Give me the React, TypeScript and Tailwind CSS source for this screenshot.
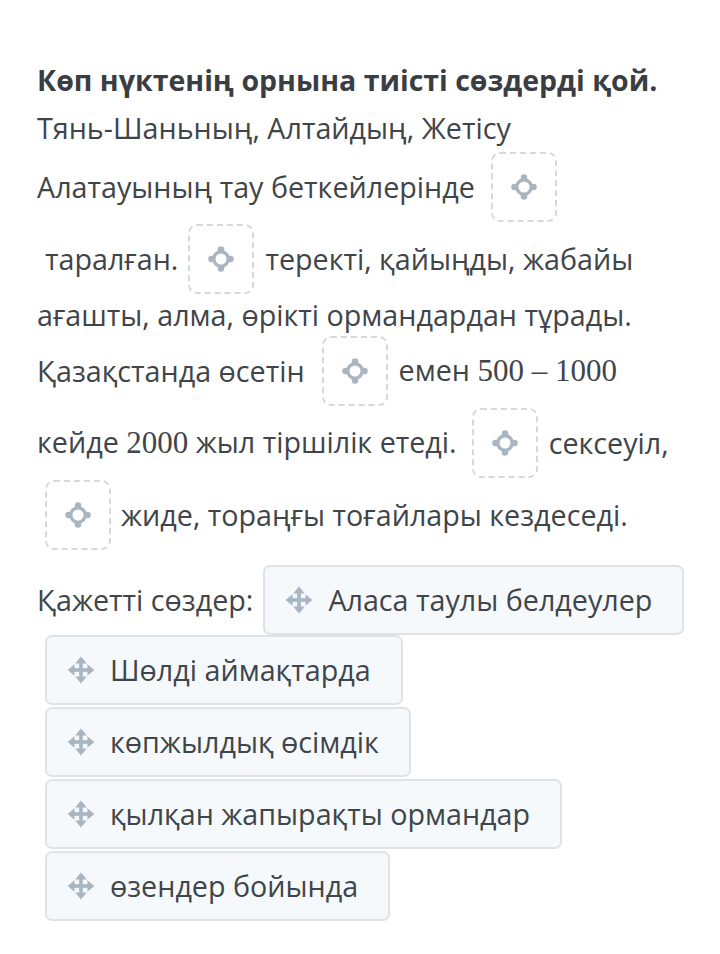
import React from "react";

const TargetIcon = () => (
  <svg width="30" height="30" viewBox="0 0 24 24" className="text-[#a9b6c1]">
    <circle cx="12" cy="12" r="5.8" fill="none" stroke="currentColor" strokeWidth="2.8" />
    <circle cx="12" cy="4.4" r="2.6" fill="currentColor" />
    <circle cx="12" cy="19.6" r="2.6" fill="currentColor" />
    <circle cx="4.4" cy="12" r="2.6" fill="currentColor" />
    <circle cx="19.6" cy="12" r="2.6" fill="currentColor" />
  </svg>
);

const MoveIcon = () => (
  <svg width="28" height="28" viewBox="0 0 24 24" className="text-[#a9b6c1] shrink-0">
    <rect x="10.4" y="5" width="3.2" height="14" fill="currentColor" />
    <rect x="5" y="10.4" width="14" height="3.2" fill="currentColor" />
    <path d="M12 0.5 L17 6.5 H7 Z" fill="currentColor" />
    <path d="M12 23.5 L17 17.5 H7 Z" fill="currentColor" />
    <path d="M0.5 12 L6.5 7 V17 Z" fill="currentColor" />
    <path d="M23.5 12 L17.5 7 V17 Z" fill="currentColor" />
  </svg>
);

const Drop = ({ className = "" }: { className?: string }) => (
  <span
    className={
      "inline-flex w-[66px] h-[70px] shrink-0 items-center justify-center rounded-[9px] border-2 border-dashed border-[#d6d8da] bg-white " +
      className
    }
  >
    <TargetIcon />
  </span>
);

const Num = ({ children }: { children: React.ReactNode }) => (
  <span className="font-['Liberation_Serif',serif] text-[31px]">{children}</span>
);

const Chip = ({ label, className = "" }: { label: string; className?: string }) => (
  <div
    className={
      "flex h-[70px] items-center gap-[15px] rounded-[7px] border-2 border-[#dfe3e7] bg-[#f5f9fc] pl-[20px] pr-[30px] " +
      className
    }
  >
    <MoveIcon />
    <span className="whitespace-nowrap">{label}</span>
  </div>
);

const words = [
  "Шөлді аймақтарда",
  "көпжылдық өсімдік",
  "қылқан жапырақты ормандар",
  "өзендер бойында",
];

export default function App() {
  return (
    <div className="min-h-[954px] w-[720px] bg-white pl-[37px] pt-[56px] font-['Open_Sans',sans-serif] text-[28.7px] text-[#404549]">
      <div className="h-[48px] flex items-center text-[28.5px] font-bold text-[#3a3e42] whitespace-nowrap">
        Көп нүктенің орнына тиісті сөздерді қой.
      </div>

      <div className="h-[47px] flex items-center whitespace-nowrap">
        Тянь-Шаньның, Алтайдың, Жетісу
      </div>
      <div className="h-[72px] flex items-center whitespace-nowrap">
        <span>Алатауының тау беткейлерінде</span>
        <Drop className="ml-[16px]" />
      </div>
      <div className="h-[72px] flex items-center whitespace-nowrap">
        <span className="ml-[8px]">таралған.</span>
        <Drop className="ml-[10px] mr-[11px]" />
        <span>теректі, қайыңды, жабайы</span>
      </div>
      <div className="h-[40px] flex items-center whitespace-nowrap">
        ағашты, алма, өрікті ормандардан тұрады.
      </div>
      <div className="h-[72px] flex items-center whitespace-nowrap">
        <span>Қазақстанда өсетін</span>
        <Drop className="ml-[17px] mr-[11px]" />
        <span>
          емен <Num>500 – 1000</Num>
        </span>
      </div>
      <div className="h-[72px] flex items-center whitespace-nowrap">
        <span>
          кейде <Num>2000</Num> жыл тіршілік етеді.
        </span>
        <Drop className="ml-[15px] mr-[11px]" />
        <span>сексеуіл,</span>
      </div>
      <div className="h-[72px] flex items-center whitespace-nowrap">
        <Drop className="ml-[8px] mr-[10px]" />
        <span>жиде, тораңғы тоғайлары кездеседі.</span>
      </div>

      <div className="mt-[14px] flex items-center">
        <span className="whitespace-nowrap">Қажетті сөздер:</span>
        <Chip label="Аласа таулы белдеулер" className="ml-[10px]" />
      </div>
      <div className="mt-[0px] ml-[8px] flex flex-col items-start gap-[2px]">
        {words.map((w) => (
          <Chip key={w} label={w} />
        ))}
      </div>
    </div>
  );
}
